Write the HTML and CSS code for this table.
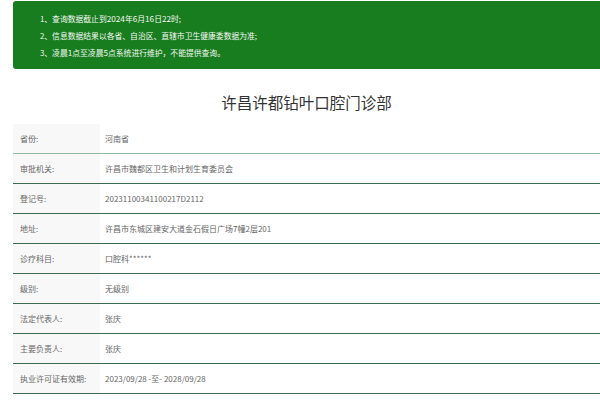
FILE: index.html
```html
<!DOCTYPE html>
<html lang="zh-CN">
<head>
<meta charset="utf-8">
<link rel="stylesheet" href="styles.css">
</head>
<body>
<div class="page">
  <div class="notice">
    <p>1、查询数据截止到<span class="num">2024</span>年<span class="num">6</span>月<span class="num">16</span>日<span class="num">22</span>时;</p>
    <p>2、信息数据结果以各省、自治区、直辖市卫生健康委数据为准;</p>
    <p>3、凌晨<span class="num">1</span>点至凌晨<span class="num">5</span>点系统进行维护，不能提供查询。</p>
  </div>
  <h1 class="title">许昌许都钻叶口腔门诊部</h1>
  <div class="info">
    <div class="row"><div class="label">省份:</div><div class="value">河南省</div></div>
    <div class="row"><div class="label">审批机关:</div><div class="value">许昌市魏都区卫生和计划生育委员会</div></div>
    <div class="row"><div class="label">登记号:</div><div class="value">20231100341100217D2112</div></div>
    <div class="row"><div class="label">地址:</div><div class="value">许昌市东城区建安大道金石假日广场7幢2层201</div></div>
    <div class="row"><div class="label">诊疗科目:</div><div class="value">口腔科******</div></div>
    <div class="row"><div class="label">级别:</div><div class="value">无级别</div></div>
    <div class="row"><div class="label">法定代表人:</div><div class="value">张庆</div></div>
    <div class="row"><div class="label">主要负责人:</div><div class="value">张庆</div></div>
    <div class="row"><div class="label">执业许可证有效期:</div><div class="value">2023/09/28 -至- 2028/09/28</div></div>
  </div>
</div>
</body>
</html>
```
FILE: styles.css
```css
html, body {
  margin: 0;
  padding: 0;
  background: #fff;
  overflow: hidden;
}
body {
  font-family: "Noto Sans CJK SC", "Noto Sans", sans-serif;
}
.page {
  margin-left: 13px;
  width: 587px;
}
.notice {
  margin-top: 1px;
  height: 68px;
  box-sizing: border-box;
  padding: 9px 0 0 27px;
  background: #187d1e;
  border-radius: 3px 0 0 3px;
  color: #f4f8f4;
  font-size: 7.8px;
  line-height: 17px;
}
.notice .num {
  font-size: 8.2px;
}
.notice p {
  margin: 0;
}
.title {
  margin: 21px 0 10px;
  text-align: center;
  font-size: 15.5px;
  line-height: 24px;
  font-weight: normal;
  color: #333;
}
.info {
  display: flex;
  flex-direction: column;
}
.row {
  display: flex;
  height: 30px;
  box-sizing: border-box;
  border-bottom: 1px solid #3b6b50;
  font-size: 8px;
  color: #666;
}
.row:first-child {
  border-bottom-color: #8fbb9f;
}
.label {
  width: 87px;
  box-sizing: border-box;
  padding-left: 7px;
  background: #f8f8f8;
  display: flex;
  align-items: center;
}
.value {
  flex: 1;
  padding-left: 5px;
  display: flex;
  align-items: center;
}
```
